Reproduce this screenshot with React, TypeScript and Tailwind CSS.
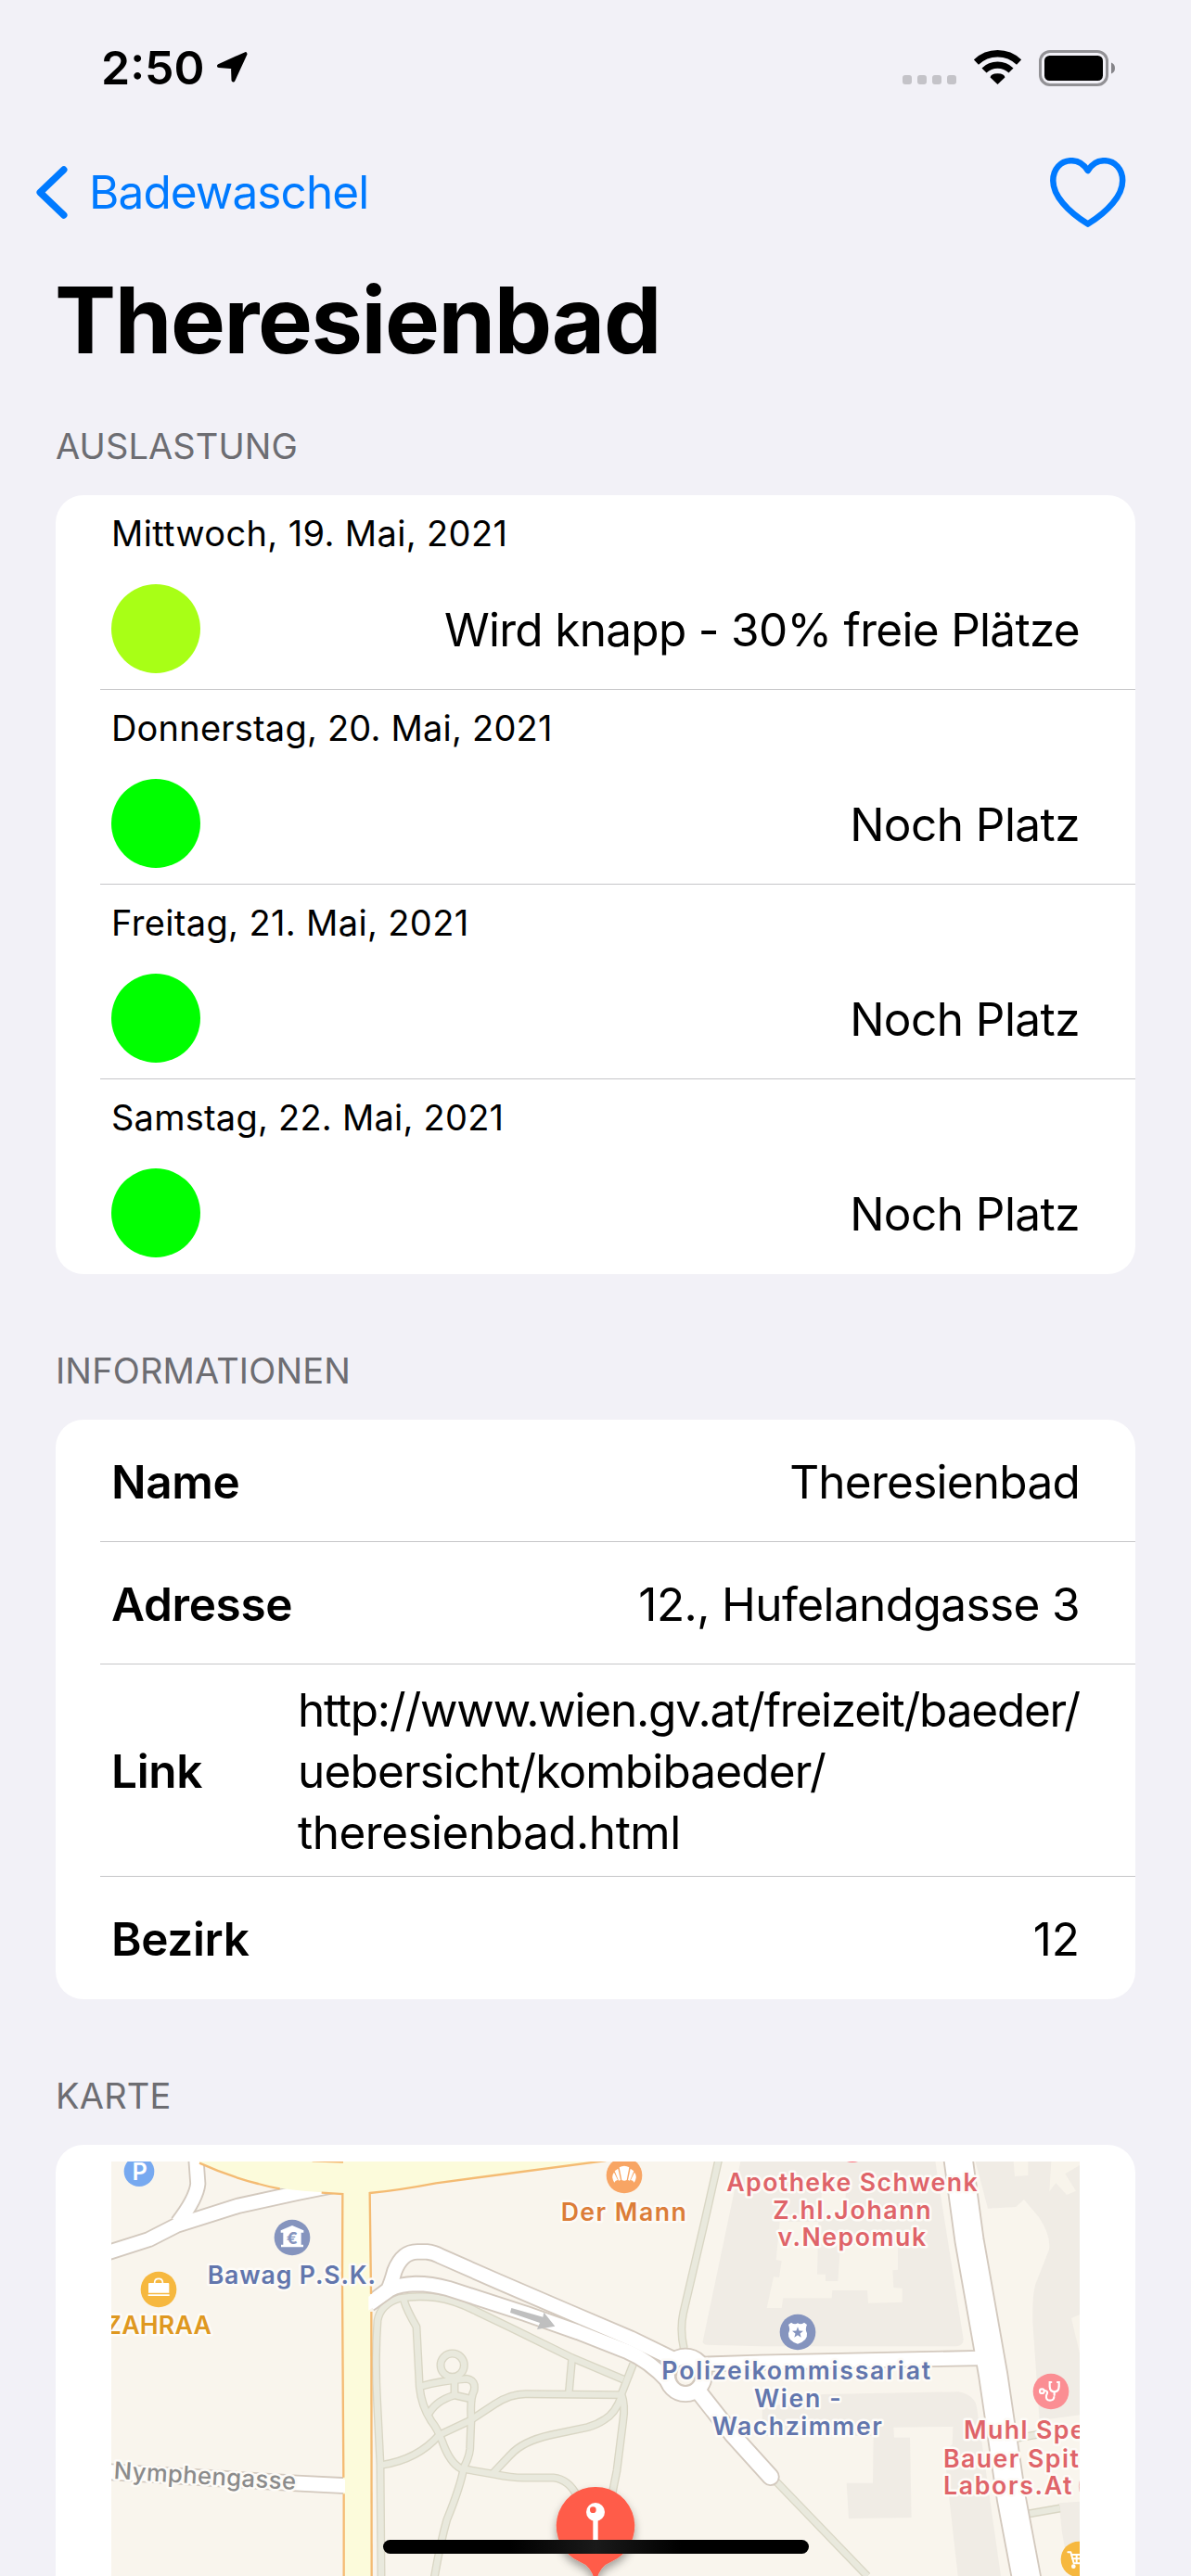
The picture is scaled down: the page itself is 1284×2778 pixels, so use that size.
import type { ReactNode } from "react";

type Occupancy = {
  date: string;
  status: string;
  dot: string;
  dateTracking: string;
  statusTracking: string;
};

const occupancy: Occupancy[] = [
  { date: "Mittwoch, 19. Mai, 2021", status: "Wird knapp - 30% freie Plätze", dot: "bg-[#a8ff16]", dateTracking: "tracking-[0.36px]", statusTracking: "tracking-[-0.7px]" },
  { date: "Donnerstag, 20. Mai, 2021", status: "Noch Platz", dot: "bg-[#00ff00]", dateTracking: "tracking-[0.2px]", statusTracking: "tracking-[-0.55px]" },
  { date: "Freitag, 21. Mai, 2021", status: "Noch Platz", dot: "bg-[#00ff00]", dateTracking: "tracking-[0.35px]", statusTracking: "tracking-[-0.55px]" },
  { date: "Samstag, 22. Mai, 2021", status: "Noch Platz", dot: "bg-[#00ff00]", dateTracking: "tracking-[0.23px]", statusTracking: "tracking-[-0.55px]" },
];

function StatusBar() {
  return (
    <div className="flex h-[146px] items-center pl-[109px] pr-[82px]">
      <span className="text-[50px] leading-none font-semibold">2:50</span>
      <svg className="ml-[11px]" width="36" height="36" viewBox="0 0 36 36">
        <path d="M32.5 3.2 L19.5 31.5 L19 17.3 L4 16 Z" fill="#000" stroke="#000" strokeWidth="4" strokeLinejoin="round" />
      </svg>
      <div className="ml-auto flex items-center">
        <div className="mt-[26px] flex gap-1.5">
          {[0, 1, 2, 3].map((i) => (
            <span key={i} className="size-2.5 rounded-[3px] bg-[#c4c3c8]" />
          ))}
        </div>
        <svg className="ml-[19px]" width="51" height="38" viewBox="0 0 51 38">
          <path d="M2.4 13.1 A33.2 33.2 0 0 1 48.6 13.1" fill="none" stroke="#000" strokeWidth="7.4" />
          <path d="M11 22 A20.8 20.8 0 0 1 40 22" fill="none" stroke="#000" strokeWidth="7.2" />
          <path d="M25.5 37 L17.6 29.4 Q17.8 25.6 25.5 25.3 Q33.2 25.6 33.4 29.4 Z" fill="#000" />
        </svg>
        <svg className="ml-[19px]" width="82" height="39" viewBox="0 0 82 39">
          <rect x="1.5" y="1.5" width="72" height="36" rx="10.5" fill="none" stroke="#929195" strokeWidth="3" />
          <rect x="6" y="6" width="63" height="27" rx="5.5" fill="#000" />
          <path d="M78 13.5 Q82 15 82 19.5 Q82 24 78 25.5 Z" fill="#858489" />
        </svg>
      </div>
    </div>
  );
}

function NavBar() {
  return (
    <div className="flex h-[122px] items-center justify-between pr-[70px] pl-[39px] text-[#007aff]">
      <div className="flex items-center">
        <svg width="34" height="57" viewBox="0 0 34 57">
          <path d="M29.8 4 L4.2 28.5 L29.8 53" fill="none" stroke="currentColor" strokeWidth="7.4" strokeLinecap="round" strokeLinejoin="round" />
        </svg>
        <span className="mt-px ml-[23px] text-[49.5px] leading-none tracking-[-0.9px]">Badewaschel</span>
      </div>
      <svg className="mt-0.5" width="82" height="76" viewBox="0 0 82 76">
        <path
          d="M40.8 14 C36.5 7 30.5 3.2 23 3.2 C11.5 3.2 3.3 12.5 3.3 24.7 C3.3 41 19 58 40.8 71.6 C62.5 58 78.2 41 78.2 24.7 C78.2 12.5 70 3.2 58.5 3.2 C51 3.2 45 7 40.8 14 Z"
          fill="none"
          stroke="currentColor"
          strokeWidth="6.5"
          strokeLinejoin="round"
        />
      </svg>
    </div>
  );
}

function SectionLabel({ className, children }: { className: string; children: ReactNode }) {
  return (
    <div className={`flex items-end pb-[30px] pl-[60px] text-[38px] leading-[46px] text-[#6d6d72] ${className}`}>{children}</div>
  );
}

function Card({ children }: { children: ReactNode }) {
  return <div className="mx-[60px] overflow-hidden rounded-[30px] bg-white">{children}</div>;
}

function OccupancyRow({ item, last }: { item: Occupancy; last: boolean }) {
  return (
    <div className={`ml-12 h-[210px] pt-[18px] pr-[60px] pl-3 ${last ? "" : "border-b border-[#c6c6c8]"}`}>
      <div className={`text-[38px] leading-[46px] ${item.dateTracking}`}>{item.date}</div>
      <div className="mt-8 flex items-center justify-between">
        <span className={`size-24 rounded-full ${item.dot}`} />
        <span className={`pt-1 text-[49.5px] leading-none ${item.statusTracking}`}>{item.status}</span>
      </div>
    </div>
  );
}

function InfoRow({ label, className, children }: { label: string; className: string; children: ReactNode }) {
  return (
    <div className={`ml-12 flex items-center justify-between border-[#c6c6c8] pr-[60px] pl-3 text-[49.5px] leading-[66px] ${className}`}>
      <span className="font-semibold tracking-[-0.35px]">{label}</span>
      {children}
    </div>
  );
}

const footpaths = [
  "M1656 705 L1490 635 L1290 537 L1180 484 Q1110 448 1050 440 Q985 433 930 443 Q870 462 861 515 Q852 640 860 780 L870 980 L873 1345",
  "M946 448 Q955 480 987 535 L997 730 Q1003 790 1035 840 Q1055 865 1070 905 Q1095 975 1130 993 L1240 1012 Q1300 1024 1340 1023 H1430 Q1480 1028 1508 1085",
  "M998 728 Q1060 710 1150 703 Q1180 708 1173 742 Q1160 765 1164 830 L1160 930 Q1158 955 1140 990 Q1130 1050 1085 1160 Q1065 1230 1045 1345",
  "M1110 706 V755",
  "M1022 825 Q1045 775 1110 756 L1163 768",
  "M873 982 Q990 965 1060 885 L1160 838 L1240 785 Q1290 752 1340 752 L1645 755",
  "M1490 637 L1480 748",
  "M1688 655 L1650 752 Q1663 790 1655 840 L1635 1000 L1620 1075",
  "M1650 760 Q1630 815 1595 835 Q1570 852 1540 860 L1420 885 Q1330 905 1290 950 L1235 1008",
  "M1965 -10 L1920 190 L1850 490 Q1838 545 1852 605",
  "M2150 1035 L2445 1341",
  "M2930 895 L2995 883",
  "M2965 1140 L3068 1122",
];

const streets = [
  { d: "M-10 294 L122 252 L210 207 L412 143 L600 102 L720 78", w: 50 },
  { d: "M274 -10 L280 72 Q275 120 215 198", w: 50 },
  { d: "M-10 1004 L600 1041 L760 1049", w: 52 },
  { d: "M838 458 L895 415 Q905 395 916 355 Q940 292 990 292 H1020 Q1045 295 1062 305 L1250 388 L1480 487 L1680 572 L1830 645", w: 51 },
  { d: "M834 461 L900 414 Q930 398 985 396 Q1035 396 1090 411 L1340 492 L1510 552 L1670 615 Q1740 645 1800 710", w: 51 },
  { d: "M1900 745 L2010 885 L2132 1020", w: 56, round: true },
  { d: "M1915 656 L2100 650 L2810 636", w: 50 },
  { d: "M2739 -10 L2775 255 L2852 690 L2911 1090 L2962 1360", w: 95 },
];

const buildings = [
  "M2035 0 L1913 582 Q1913 592 1925 593 L2100 598 L2735 598 Q2755 595 2756 575 L2665 0 Z",
  "M2795 0 L2835 152 L2925 147 L2952 123 L3000 180 Q3040 240 3033 285 L2988 400 Q2978 440 2980 520 L3002 838 L3132 820 V0 Z",
  "M2105 800 L2300 753 L2740 745 Q2795 755 2800 800 L2877 1341 H2738 L2700 1000 L2690 940 L2720 915 L2722 858 L2530 860 L2532 893 H2583 L2588 1152 L2385 1155 L2378 1040 L2463 1040 L2465 888 H2105 Z",
  "M3065 1105 L3132 1100 V1341 H3100 L3075 1200 Z",
];

const courtyards = [
  "M2162 195 L2150 318 L2168 322 L2160 375 L2142 373 L2120 474 H2168 L2173 442 H2330 L2332 417 H2445 L2448 458 L2558 455 V410 L2530 408 L2527 352 L2544 350 V270 H2358 L2350 387 H2310 V365 H2283 L2287 195 Z",
  "M2298 95 L2375 100 V180 L2292 175 Z",
  "M2918 0 L2922 48 L2965 45 V0 Z",
  "M3040 0 L3034 97 L3055 70 L3090 108 L3120 95 L3085 40 L3132 12 V0 Z",
  "M3105 507 L3132 495 V620 Z",
];

type MapLabel = { text: string; x: number; y: number; color: string; spacing: number; anchor?: "start" | "middle" | "end" };

const labels: MapLabel[] = [
  { text: "Bawag P.S.K.", x: 311, y: 395, color: "#6276ad", spacing: 2.6 },
  { text: "ZAHRAA", x: 324, y: 559, color: "#df9820", spacing: 0.6, anchor: "end" },
  { text: "Der Mann", x: 1454, y: 192, color: "#dc7d38", spacing: 4.4 },
  { text: "Apotheke Schwenk", x: 1990, y: 95, color: "#df6469", spacing: 4.2 },
  { text: "Z.hl.Johann", x: 2398, y: 185, color: "#df6469", spacing: 5, anchor: "middle" },
  { text: "v.Nepomuk", x: 2397, y: 274, color: "#df6469", spacing: 4.6, anchor: "middle" },
  { text: "Polizeikommissariat", x: 1780, y: 705, color: "#6276ad", spacing: 5.4 },
  { text: "Wien -", x: 2222, y: 795, color: "#6276ad", spacing: 5, anchor: "middle" },
  { text: "Wachzimmer", x: 2220, y: 885, color: "#6276ad", spacing: 4.6, anchor: "middle" },
  { text: "Muhl Spe", x: 2757, y: 898, color: "#df6469", spacing: 4.2 },
  { text: "Bauer Spit", x: 2691, y: 989, color: "#df6469", spacing: 4.4 },
  { text: "Labors.At", x: 2691, y: 1078, color: "#df6469", spacing: 5 },
];

/* Map canvas: three drawing units per screen pixel. */
function CityMap() {
  return (
    <svg className="block" width="1044" height="447" viewBox="0 0 3132 1341">
      <defs>
        <filter id="pin-shadow" x="-30%" y="-30%" width="160%" height="160%">
          <feDropShadow dx="0" dy="16" stdDeviation="14" floodColor="#000" floodOpacity="0.35" />
        </filter>
      </defs>
      <rect width="3132" height="1341" fill="#f9f5ed" />
      {buildings.map((d) => (
        <path key={d} d={d} fill="#f0ece5" />
      ))}
      {courtyards.map((d) => (
        <path key={d} d={d} fill="#f8f4eb" />
      ))}

      <g fill="none" strokeLinejoin="round">
        <g stroke="#d9d6c4" strokeWidth="27">
          {footpaths.map((d) => (
            <path key={d} d={d} />
          ))}
          <circle cx="1103" cy="659" r="38" />
        </g>
        <g stroke="#e9e9dd" strokeWidth="19">
          {footpaths.map((d) => (
            <path key={d} d={d} />
          ))}
          <circle cx="1103" cy="659" r="38" />
        </g>
        {streets.map((s) => (
          <path key={s.d} d={s.d} stroke="#d3c9be" strokeWidth={s.w + 4} strokeLinecap={s.round ? "round" : "butt"} />
        ))}
        <circle cx="1857" cy="691" r="60" stroke="#d3c9be" strokeWidth="58" />
        {streets.map((s) => (
          <path key={s.d} d={s.d} stroke="#fff" strokeWidth={s.w - 7} strokeLinecap={s.round ? "round" : "butt"} />
        ))}
        <circle cx="1857" cy="691" r="60" stroke="#fff" strokeWidth="47" />
        <circle cx="1857" cy="695" r="31" fill="#f9f5ed" stroke="#d3c9be" strokeWidth="6" />
      </g>

      <path d="M270 -10 L288 5 Q380 48 475 72 Q560 95 750 104 V1341 H841 L836 102 Q930 93 1050 70 L1600 -2 V-10 Z" fill="#fcfbdb" />
      <g fill="none" stroke="#f4bb73" strokeWidth="7">
        <path d="M285 5 Q380 48 475 72 Q505 81 545 88" />
        <path d="M680 101 L748 105 L747 400 L751 1022" />
        <path d="M752 1075 V1341" />
        <path d="M1600 -3 L1050 70 Q930 93 836 102 L840 428" />
        <path d="M841 486 L842 1341" />
        <path d="M650 -2 L750 2" />
      </g>
      <path d="M744 1027 L756 1028 V1070 L744 1069 Z M832 437 L846 430 V472 L832 482 Z" fill="#fff" />

      <path d="M1294 474 L1396 503 L1399 488 L1435 533 L1377 543 L1386 522 L1290 489 Z" fill="#bfbfbf" />

      <g fontFamily="Inter, sans-serif" fontSize="80" fontWeight="600" stroke="#fdfbf7" strokeWidth="15" strokeLinejoin="round" paintOrder="stroke">
        {labels.map((l) => (
          <text key={l.text} x={l.x} y={l.y} fill={l.color} letterSpacing={l.spacing} textAnchor={l.anchor ?? "start"}>
            {l.text}
          </text>
        ))}
        <text x="7" y="1026" fill="#8b8b8b" fontSize="77" fontWeight="500" letterSpacing="1.2" transform="rotate(3.5 7 1026)">
          Nymphengasse
        </text>
      </g>
      <path d="M3132 1034 Q3128 1050 3132 1068" fill="none" stroke="#df6469" strokeWidth="2" strokeOpacity="0.6" />

      {/* Parking */}
      <circle cx="90" cy="32" r="49" fill="#77a9f0" />
      <text x="92" y="61" fill="#fff" fontFamily="Inter, sans-serif" fontSize="76" fontWeight="600" textAnchor="middle">P</text>

      {/* Bank */}
      <circle cx="585" cy="246" r="58" fill="#8594be" />
      <path d="M585 207 L622 223 V230 H614 V269 H621 V277 H549 V269 H556 V230 H548 V223 Z" fill="#fff" />
      <text x="585" y="266" fill="#8594be" fontFamily="Inter, sans-serif" fontSize="54" fontWeight="700" textAnchor="middle">€</text>

      {/* Shopping bag */}
      <circle cx="153" cy="414" r="58" fill="#f6b83f" />
      <path d="M120 396 Q120 393 123 393 H184 Q187 393 187 396 V425 H120 Z M119 430 H188 V435 H119 Z" fill="#fff" />
      <path d="M140 394 V390 Q141 379 153 379 Q165 379 166 390 V394" fill="none" stroke="#fff" strokeWidth="5" />

      {/* Bakery */}
      <circle cx="1659" cy="45" r="58" fill="#f8a564" />
      <g fill="#fff">
        <path d="M1643 19 Q1659 10 1675 19 L1667 60 Q1659 65 1651 60 Z" />
        <path d="M1639 23 L1647 60 L1641 62 L1628 31 Z" />
        <path d="M1679 23 L1671 60 L1677 62 L1690 31 Z" />
        <path d="M1626 35 L1638 60 Q1630 61 1627 68 Q1615 48 1626 35 Z" />
        <path d="M1692 35 L1680 60 Q1688 61 1691 68 Q1703 48 1692 35 Z" />
      </g>

      {/* Police */}
      <circle cx="2220" cy="552" r="58" fill="#8594be" />
      <path d="M2199 521 Q2210 529 2220 523 Q2230 529 2241 521 L2250 528 Q2243 542 2250 556 Q2253 580 2220 590 Q2187 580 2190 556 Q2197 542 2190 528 Z" fill="#fff" />
      <path d="M2220 535 L2224.700 547.500 L2238 548 L2227.600 556.500 L2231 569 L2220 562 L2209 569 L2212.400 556.500 L2202 548 L2215.300 547.500 Z" fill="#8594be" />

      {/* Doctor */}
      <circle cx="3039" cy="744" r="58" fill="#fb8e93" />
      <g fill="none" stroke="#fff" strokeWidth="6.500" strokeLinecap="round">
        <circle cx="3010" cy="743" r="7" />
        <path d="M3040 714 H3035 V728 Q3036 745 3050 745 Q3064 745 3065 728 V714 H3060" />
        <path d="M3050 746 V756" />
        <path d="M3019 741 Q3033 742 3024 757 Q3022 773 3036 773 Q3048 773 3049 762" />
      </g>

      {/* Supermarket */}
      <circle cx="3129" cy="1287" r="58" fill="#f6b83f" />
      <g fill="none" stroke="#fff" strokeWidth="6" strokeLinecap="round" strokeLinejoin="round">
        <path d="M3094 1264 H3103 L3113 1300 H3150" />
        <path d="M3106 1272 H3155 M3109 1285 H3155 M3122 1272 V1298" />
      </g>
      <circle cx="3112" cy="1310" r="7" fill="#fff" />

      <circle cx="2397" cy="-54" r="57" fill="#fb6e78" />

      {/* Location pin */}
      <path
        d="M1566 1053 A126 126 0 0 1 1616 1295 Q1582 1308 1570 1350 H1562 Q1550 1308 1516 1295 A126 126 0 0 1 1566 1053 Z"
        fill="#ff5b48"
        filter="url(#pin-shadow)"
      />
      <rect x="1558" y="1150" width="16" height="110" fill="#fff" />
      <circle cx="1566" cy="1134" r="30" fill="#fff" />
      <circle cx="1558" cy="1127" r="10" fill="#ff5b48" />
    </svg>
  );
}

export default function App() {
  return (
    <div className="relative flex h-[2778px] w-[1284px] flex-col overflow-hidden bg-[#f2f1f7] font-['Inter',sans-serif] text-black">
      <StatusBar />
      <NavBar />
      <h1 className="flex h-[154px] items-center pl-[59px] text-[99px] leading-none font-bold tracking-[-1.4px]">Theresienbad</h1>

      <SectionLabel className="h-28 tracking-[0.1px]">AUSLASTUNG</SectionLabel>
      <Card>
        {occupancy.map((item, i) => (
          <OccupancyRow key={item.date} item={item} last={i === occupancy.length - 1} />
        ))}
      </Card>

      <SectionLabel className="h-[157px] tracking-[0.15px]">INFORMATIONEN</SectionLabel>
      <Card>
        <InfoRow label="Name" className="h-[132px] border-b pt-[3px]">
          <span className="tracking-[-0.75px]">Theresienbad</span>
        </InfoRow>
        <InfoRow label="Adresse" className="h-[132px] border-b pt-[3px]">
          <span className="tracking-[-0.6px]">12., Hufelandgasse 3</span>
        </InfoRow>
        <InfoRow label="Link" className="h-[229px] border-b pt-px">
          <span className="w-[843px] whitespace-nowrap">
            <span className="block tracking-[-1.23px]">http://www.wien.gv.at/freizeit/baeder/</span>
            <span className="block tracking-[-0.85px]">uebersicht/kombibaeder/</span>
            <span className="block tracking-[-0.5px]">theresienbad.html</span>
          </span>
        </InfoRow>
        <InfoRow label="Bezirk" className="h-[132px] pt-px">
          <span>12</span>
        </InfoRow>
      </Card>

      <SectionLabel className="h-[157px] tracking-[0.2px]">KARTE</SectionLabel>
      <div className="mx-[60px] h-[465px] shrink-0 rounded-t-[30px] bg-white px-[60px] pt-[18px]">
        <CityMap />
      </div>

      <div className="absolute bottom-6 left-[413px] h-[15px] w-[459px] rounded-full bg-[linear-gradient(90deg,#000_30%,#1a1a1a_50%,#000_70%)]" />
    </div>
  );
}
